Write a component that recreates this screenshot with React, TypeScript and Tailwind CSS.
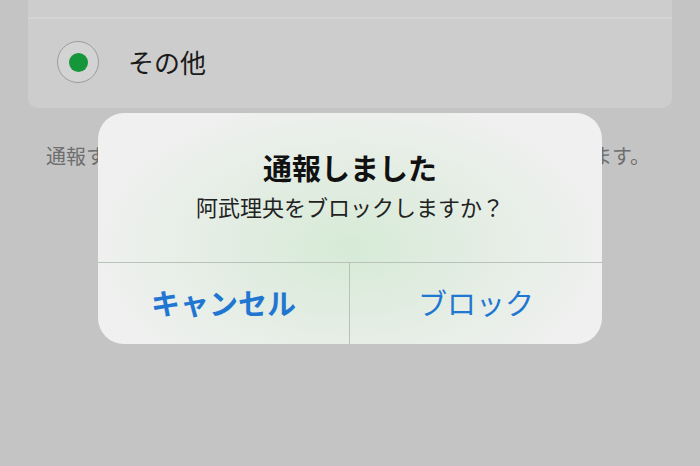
export default function App() {
  return (
    <div className="relative h-[466px] w-[700px] overflow-hidden bg-[#c4c4c4] font-['Noto_Sans_CJK_JP',sans-serif]">
      {/* report reasons card */}
      <div className="mx-[28px] rounded-b-[10px] bg-[#cdcdcd]">
        <div className="h-[17px]" />
        <div className="h-[2px] bg-[#d4d4d4]" />
        <div className="flex h-[89px] items-center pb-[3px] pl-[29px]">
          <div className="flex h-[42px] w-[42px] items-center justify-center rounded-full border-[1.5px] border-[#9c9c9c] bg-[#d3d3d3]">
            <div className="h-[19px] w-[19px] rounded-full bg-[#15963a]" />
          </div>
          <span className="ml-[29px] text-[26px] leading-[32px] text-[#1a1a1a]">その他</span>
        </div>
      </div>

      <p className="mt-[34px] flex justify-between pl-[46px] pr-[50px] text-[20px] leading-[28px] text-[#6e6e6e] whitespace-nowrap">
        <span>通報すると、</span>
        <span>されます。</span>
      </p>

      {/* alert */}
      <div className="absolute left-[98px] top-[113px] flex h-[231px] w-[504px] flex-col overflow-hidden rounded-[26px] bg-[radial-gradient(ellipse_250px_150px_at_50%_58%,#d6ead6_0%,#e3ede3_50%,#eff0ef_100%)]">
        <div className="flex h-[149px] flex-col items-center">
          <h2 className="pt-[36px] text-[29px] font-bold leading-[36px] text-[#111111]">通報しました</h2>
          <p className="mt-[6px] text-[22px] leading-[30px] text-[#222222]">阿武理央をブロックしますか？</p>
        </div>
        <div className="h-px bg-[#b8c2b8]" />
        <div className="grid flex-1 grid-cols-2">
          <button className="flex items-center justify-center border-r border-[#b8c2b8] pb-[4px] text-[29px] font-bold leading-[36px] text-[#1f77d2]">
            キャンセル
          </button>
          <button className="flex items-center justify-center pb-[4px] text-[29px] leading-[36px] text-[#1f77d2]">
            ブロック
          </button>
        </div>
      </div>
    </div>
  );
}
